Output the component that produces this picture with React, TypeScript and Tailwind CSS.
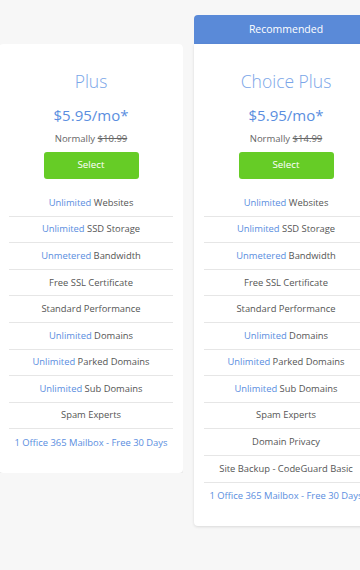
import React from 'react';

// ---------- types ----------
interface Feature {
  hi?: string;
  rest?: string;
  allBlue?: boolean;
}

interface Plan {
  name: string;
  price: string;
  normally: string;
  features: Feature[];
  recommended?: boolean;
}

// ---------- data ----------
const base: Feature[] = [
  { hi: 'Unlimited', rest: 'Websites' },
  { hi: 'Unlimited', rest: 'SSD Storage' },
  { hi: 'Unmetered', rest: 'Bandwidth' },
  { rest: 'Free SSL Certificate' },
  { rest: 'Standard Performance' },
  { hi: 'Unlimited', rest: 'Domains' },
  { hi: 'Unlimited', rest: 'Parked Domains' },
  { hi: 'Unlimited', rest: 'Sub Domains' },
  { rest: 'Spam Experts' },
];

const office: Feature = { hi: '1 Office 365 Mailbox - Free 30 Days', allBlue: true };

const plans: Plan[] = [
  {
    name: 'Plus',
    price: '$5.95/mo*',
    normally: '$10.99',
    features: [...base, office],
  },
  {
    name: 'Choice Plus',
    price: '$5.95/mo*',
    normally: '$14.99',
    recommended: true,
    features: [
      ...base,
      { rest: 'Domain Privacy' },
      { rest: 'Site Backup - CodeGuard Basic' },
      office,
    ],
  },
];

// ---------- components ----------
function PlanCard({ plan }: { plan: Plan }) {
  return (
    <div className="w-[184px] shrink-0 bg-white rounded-b-[4px] shadow-[0_1px_3px_rgba(0,0,0,0.12)] px-[10px] pt-[24px] pb-[17px] flex flex-col items-center">
      <div className="text-[17.5px] leading-[26px] font-light text-[#7aa5e8]">{plan.name}</div>
      <div className="mt-[9px] text-[15px] leading-[24px] text-[#5a8ee0]">{plan.price}</div>
      <div className="mt-[5px] text-[9.5px] leading-[14px] text-[#666]">
        Normally <span className="line-through">{plan.normally}</span>
      </div>
      <button className="mt-[6px] w-[95px] h-[27px] rounded-[3px] bg-[#66cc26] text-white text-[9.8px]">
        Select
      </button>
      <div className="mt-[11px] w-full flex flex-col">
        {plan.features.map((f, i) => (
          <div
            key={i}
            className={`h-[26.6px] flex items-center justify-center whitespace-nowrap text-[9.4px] ${
              i < plan.features.length - 1 ? 'border-b border-[#e6e6e6]' : ''
            }`}
          >
            {f.allBlue ? (
              <span className="text-[#5a8ee0]">{f.hi}</span>
            ) : (
              <span className="text-[#555]">
                {f.hi && <span className="text-[#5a8ee0]">{f.hi} </span>}
                {f.rest}
              </span>
            )}
          </div>
        ))}
      </div>
    </div>
  );
}

export default function App() {
  return (
    <div
      className="w-[360px] h-[570px] overflow-hidden bg-[#f7f7f7]"
      style={{ fontFamily: '"Open Sans", "Noto Sans", sans-serif' }}
    >
      <div className="flex items-start gap-[11px] ml-[-1px] pt-[15px]">
        <div className="shrink-0 mt-[29px] rounded-t-[4px] overflow-hidden">
          <PlanCard plan={plans[0]} />
        </div>
        <div className="shrink-0 flex flex-col">
          <div className="h-[29px] w-[184px] rounded-t-[4px] bg-[#5a8ad8] text-white text-[10.5px] flex items-center justify-center">
            Recommended
          </div>
          <PlanCard plan={plans[1]} />
        </div>
      </div>
    </div>
  );
}
